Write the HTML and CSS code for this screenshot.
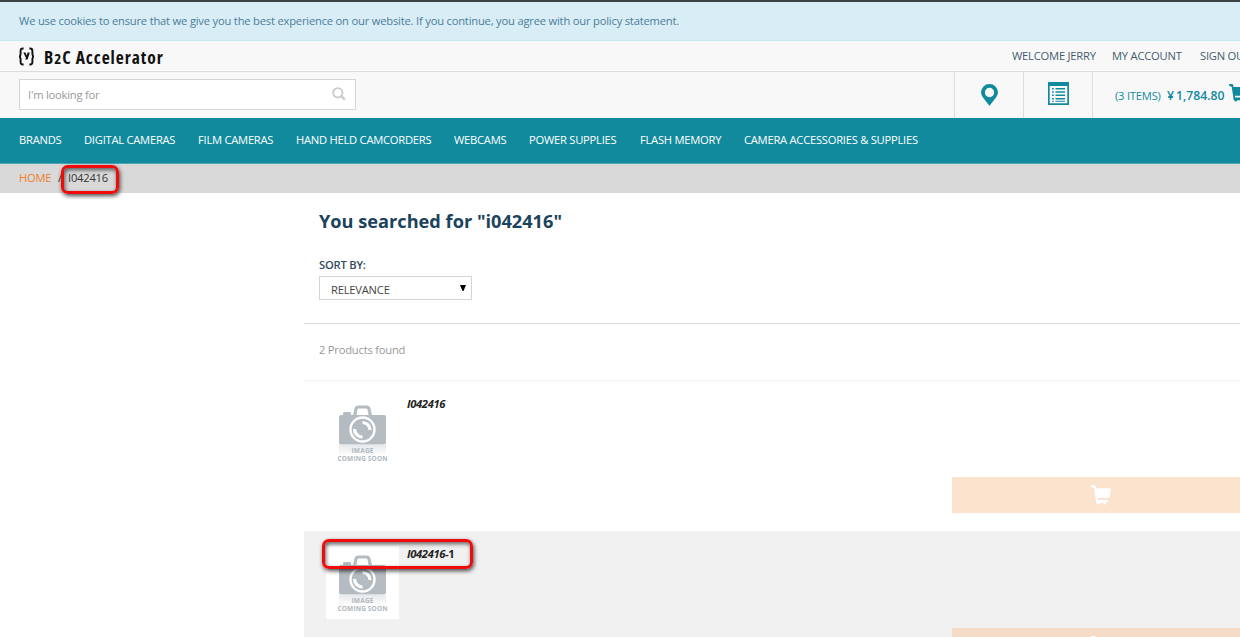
FILE: index.html
```
<!DOCTYPE html>
<html lang="en">
<head>
  <meta charset="utf-8">
  <title>Search | B2C Accelerator</title>
  <link rel="stylesheet" href="styles.css">
</head>
<body>
  <!-- shared shapes -->
  <svg class="sprite" aria-hidden="true">
    <symbol id="cart" viewBox="0 0 20 20">
      <path d="M1.3 0h2.200c.6 0 1 .4 1.100 1L4.900 3.200h14.200c.6 0 .9.500.8 1L18.600 12c-.1.700-.6 1-1.200 1H6.600l.3 2h9.500c.6 0 .9.400.9.900s-.4.900-.9.900h-.2L14.500 19.500h-1L12 18h-2.500L8 19.500H7L5.200 17.500 3 3 1.200 2.600A1.300 1.300 0 0 1 1.300 0z"/>
    </symbol>
    <symbol id="camera" viewBox="0 0 73 73">
      <defs>
        <linearGradient id="fade" x1="0" y1="0" x2="0" y2="1">
          <stop offset="0" stop-color="#e6e9ec"/>
          <stop offset="1" stop-color="#fff"/>
        </linearGradient>
      </defs>
      <rect width="73" height="73" fill="#fff"/>
      <rect x="13" y="49" width="47" height="11" fill="url(#fade)"/>
      <path d="M28.500 20l1.500-7q.5-2 2.500-2h8q2 0 2.500 2l1.500 7" fill="none" stroke="#b4bcc2" stroke-width="3.200"/>
      <path d="M15 19h2v-1.500q0-1.500 1.500-1.500h5q1.500 0 1.500 1.500V19h33q2 0 2 2v25.500q0 2-2 2H15q-2 0-2-2V21q0-2 2-2z" fill="#b4bcc2"/>
      <circle cx="36.500" cy="33.500" r="12" fill="#b4bcc2" stroke="#fff" stroke-width="2.400"/>
      <path d="M36.500 26.500a7.500 7.500 0 0 1 7.500 7.500M36.500 41a8 8 0 0 1-8-8" fill="none" stroke="#fff" stroke-width="3.200"/>
    </symbol>
  </svg>

  <div class="cookie-notice">We use cookies to ensure that we give you the best experience on our website. If you continue, you agree with our policy statement.</div>

  <header>
    <div class="top-bar">
      <a class="logo">
        <svg class="logo-mark" viewBox="0 0 17 19">
          <path d="M5.600 1.500H4.800Q2.600 1.500 2.600 4V7L1.900 9.500 2.600 12v3q0 2.500 2.200 2.500h.8M11.400 1.500h.8q2.200 0 2.200 2.500v3l.7 2.500-.7 2.500v3q0 2.500-2.200 2.500h-.8" fill="none" stroke="#111" stroke-width="1.900"/>
          <path d="M5.300 5.500h2.200l1.200 3 .9-3h2.200L9.600 12.500H7.400l.5-1.700z" fill="#111"/>
        </svg>
        <span class="logo-text">B<span class="oldstyle">2</span>C Accelerator</span>
      </a>
      <ul class="account-links">
        <li class="welcome">WELCOME JERRY</li>
        <li class="account">MY ACCOUNT</li>
        <li class="sign-out">SIGN OUT</li>
      </ul>
    </div>

    <div class="search-bar">
      <div class="search-box">
        <span class="placeholder">I'm looking for</span>
        <svg class="search-icon" viewBox="0 0 14 14">
          <circle cx="5.800" cy="5.800" r="4.700" fill="none" stroke="#ccc" stroke-width="1.900"/>
          <path d="M9.200 9.200l3.700 3.500" stroke="#ccc" stroke-width="2.300"/>
        </svg>
      </div>
      <div class="tools">
        <a class="tool">
          <svg class="pin" viewBox="0 0 17 22">
            <path fill-rule="evenodd" d="M8.500 0A8.400 8.400 0 0 1 17 8.300C17 13 11 18 8.500 22 6 18 0 13 0 8.300A8.400 8.400 0 0 1 8.500 0zm0 3.800a4.700 4.700 0 1 0 0 9.400 4.700 4.700 0 0 0 0-9.400z"/>
          </svg>
        </a>
        <a class="tool">
          <svg class="list" viewBox="0 0 21 23">
            <path fill-rule="evenodd" d="M0 0h21v23H0zM1.700 4v17.300h17.600V4z"/>
            <path d="M4 6h1.800v1.500H4zm3.500 0H17v1.500H7.500zM4 9.300h1.800v1.500H4zm3.500 0H17v1.500H7.500zM4 12.600h1.800v1.500H4zm3.500 0H17v1.500H7.500zM4 15.900h1.800v1.500H4zm3.500 0H17v1.500H7.500zM4 18.800h1.800v1H4zm3.500 0H17v1H7.500z"/>
          </svg>
        </a>
        <a class="mini-cart">
          <span class="items">(3 ITEMS)</span>
          <span class="total"><span class="yen">¥</span>1,784.80</span>
          <svg class="header-cart"><use href="#cart"/></svg>
        </a>
      </div>
    </div>
  </header>

  <nav>
    <ul class="nav-links">
      <li>BRANDS</li>
      <li>DIGITAL CAMERAS</li>
      <li>FILM CAMERAS</li>
      <li>HAND HELD CAMCORDERS</li>
      <li>WEBCAMS</li>
      <li>POWER SUPPLIES</li>
      <li>FLASH MEMORY</li>
      <li>CAMERA ACCESSORIES &amp; SUPPLIES</li>
    </ul>
  </nav>

  <div class="breadcrumb">
    <a class="home">HOME</a>
    <span class="slash">/</span>
    <span class="current">I042416<span class="marker marker-crumb"></span></span>
  </div>

  <main>
    <div class="results-head">
      <h1>You searched for "i042416"</h1>
      <label class="sort-label">SORT BY:</label>
      <div class="sort-select">
        <span class="sort-value">RELEVANCE</span>
        <svg class="arrow" viewBox="0 0 6 6"><path d="M0 0h6L3.500 6h-1z"/></svg>
      </div>
    </div>
    <div class="count">2 Products found</div>

    <div class="product">
      <svg class="thumb" viewBox="0 0 73 73">
        <use href="#camera"/>
        <text class="camera-text" x="36.500" y="56.500" textLength="22">IMAGE</text>
        <text class="camera-text" x="36.500" y="64.500" textLength="50">COMING SOON</text>
      </svg>
      <div class="product-name"><em>I042416</em></div>
      <button class="add-to-cart"><svg class="cart-icon"><use href="#cart"/></svg></button>
    </div>
    <div class="product product-alt">
      <svg class="thumb" viewBox="0 0 73 73">
        <use href="#camera"/>
        <text class="camera-text" x="36.500" y="56.500" textLength="22">IMAGE</text>
        <text class="camera-text" x="36.500" y="64.500" textLength="50">COMING SOON</text>
      </svg>
      <div class="product-name"><em>I042416</em>-1</div>
      <button class="add-to-cart"><svg class="cart-icon"><use href="#cart"/></svg></button>
      <span class="marker marker-product"></span>
    </div>
  </main>
</body>
</html>
```
FILE: styles.css
```
* {
  box-sizing: border-box;
}
html {
  overflow: hidden;
}
body {
  margin: 0;
  height: 637px;
  overflow: hidden;
  background: #fff;
  color: #333;
  font: 11.2px/16px "Open Sans", sans-serif;
  letter-spacing: -0.22px;
  white-space: nowrap;
}
ul {
  list-style: none;
  margin: 0;
  padding: 0;
}
.sprite {
  display: block;
  width: 0;
  height: 0;
}

.cookie-notice {
  height: 41px;
  padding: 11px 19px 0;
  border-top: 2px solid #3c4245;
  border-bottom: 1px solid #c6e9f0;
  background: #d9edf7;
  color: #4c7d97;
  letter-spacing: -0.2px;
}

/* Header */
header {
  background: #f8f8f8;
}
.top-bar {
  display: flex;
  justify-content: space-between;
  height: 31px;
  border-bottom: 1px solid #ddd;
}
.logo {
  display: flex;
  padding: 6px 0 0 18px;
}
.logo-mark {
  width: 17px;
  height: 19px;
}
.logo-text {
  margin-left: 9px;
  color: #111;
  font: bold 17.5px/20px "Open Sans", sans-serif;
  font-stretch: 75%;
  letter-spacing: 0.95px;
}
.oldstyle {
  font-size: 15px;
}
.account-links {
  display: flex;
  width: 228px;
  padding-top: 7px;
  color: #475b6d;
}
.welcome {
  flex: 0 0 100px;
}
.account {
  flex: 0 0 88px;
}
.search-bar {
  display: flex;
  justify-content: space-between;
  height: 46px;
}
.search-box {
  display: flex;
  justify-content: space-between;
  width: 337px;
  height: 31px;
  margin: 7px 0 0 19px;
  padding: 7px 9px 0 8px;
  border: 1px solid #d5d5d5;
  background: #fff;
  color: #999;
}
.search-icon {
  width: 14px;
  height: 14px;
}
.tools {
  display: flex;
  width: 286px;
  fill: #128a9e;
}
.tool {
  flex: 0 0 69px;
  border-left: 1px solid #ddd;
}
.pin {
  display: block;
  width: 17px;
  height: 22px;
  margin: 12px 0 0 26px;
}
.list {
  display: block;
  width: 21px;
  height: 23px;
  margin: 10px 0 0 24px;
}
.mini-cart {
  display: flex;
  flex: 0 0 170px;
  border-left: 1px solid #ddd;
  padding: 16px 0 0 22px;
  color: #128a9e;
}
.items {
  width: 52px;
}
.total {
  width: 62px;
  font-size: 12.2px;
  font-weight: 600;
  letter-spacing: 0;
}
.yen {
  margin-right: 2px;
}
.header-cart {
  flex: none;
  width: 18px;
  height: 18px;
  margin-top: -4px;
}

/* Navigation */
nav {
  height: 46px;
  padding: 14px 19px 0;
  border-bottom: 1px solid #4ba5b3;
  background: #128a9e;
  color: #fff;
  letter-spacing: -0.25px;
}
.nav-links {
  display: grid;
  grid-template-columns: 65px 114px 98px 158px 75px 111px 104px auto;
}
.breadcrumb {
  display: flex;
  height: 29px;
  padding: 6px 19px 0;
  background: #d9d9d9;
}
.home {
  width: 39px;
  color: #f08030;
}
.slash {
  width: 10px;
}
.current {
  position: relative;
}
.marker {
  position: absolute;
  border: 3px solid #f00a0a;
  border-radius: 7px;
  box-shadow: 1px 2px 4px rgba(0, 0, 0, .7), inset 1px 2px 4px rgba(0, 0, 0, .6);
}
.marker-crumb {
  top: -5px;
  left: -7px;
  width: 58px;
  height: 29px;
}

/* Results */
main {
  margin-left: 304px;
}
.results-head {
  height: 131px;
  padding: 16px 15px 0;
  border-bottom: 1px solid #d8d8d8;
}
h1 {
  margin: 0;
  color: #1b435c;
  font-size: 18.2px;
  line-height: 25px;
  letter-spacing: 0;
}
.sort-label {
  display: block;
  margin-top: 23px;
  color: #34495e;
  font-weight: 600;
}
.sort-select {
  display: flex;
  justify-content: space-between;
  width: 153px;
  height: 24px;
  margin-top: 3px;
  padding: 5px 5px 0 11px;
  border: 1px solid #d5d5d5;
  color: #444;
}
.arrow {
  width: 6px;
  height: 6px;
  margin-top: 3px;
}
.count {
  height: 57px;
  padding: 18px 15px 0;
  border-bottom: 1px solid #f2f2f2;
  color: #999;
}
.product {
  display: flex;
  position: relative;
  height: 150px;
  padding: 15px 0 0 22px;
}
.product-alt {
  height: 106px;
  overflow: hidden;
  background: #f1f1f1;
}
.thumb {
  flex: none;
  width: 73px;
  height: 73px;
}
.product-name {
  flex: none;
  width: 545px;
  margin-left: 8px;
  color: #222;
  font-weight: bold;
  letter-spacing: -0.35px;
}
.add-to-cart {
  flex: 0 0 298px;
  height: 36px;
  margin-top: 81px;
  padding: 0;
  border: 0;
  background: #fbe3ce;
}
.product-alt .add-to-cart {
  margin-top: 82px;
  background: #f6dcc7;
}
.cart-icon {
  display: block;
  width: 20px;
  height: 20px;
  margin: 0 auto;
  fill: #fff;
}
.marker-product {
  top: 8px;
  left: 18px;
  width: 151px;
  height: 30px;
}
.camera-text {
  fill: #b0b8be;
  font: bold 6.500px "Open Sans", sans-serif;
  letter-spacing: 0;
  text-anchor: middle;
}
```
